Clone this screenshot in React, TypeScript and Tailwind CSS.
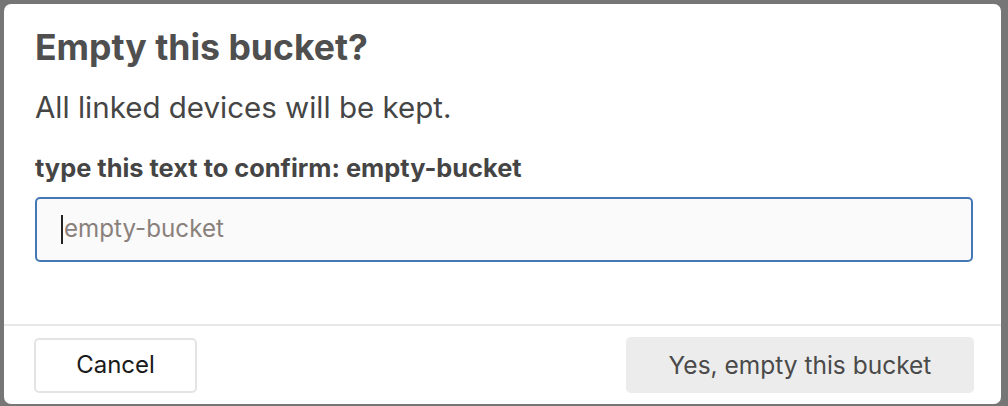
export default function App() {
    return (
        <div
            className="h-[406px] w-[1008px] bg-[#767676] pl-1 pr-[7px] pt-1 pb-[2px]"
            style={{ fontFamily: 'Inter, "Noto Sans", sans-serif' }}
        >
            <div className="flex h-full flex-col rounded-[7px] bg-white">
                <div className="flex flex-1 flex-col px-[31px] pt-[24px]">
                    <h1 className="text-[35.6px] leading-[40px] font-bold text-[#4f4f4f]">
                        Empty this bucket?
                    </h1>
                    <p className="mt-[21px] text-[29.5px] leading-[36px] text-[#454545]">
                        All linked devices will be kept.
                    </p>
                    <label className="mt-[27px] text-[25.4px] leading-[32px] font-bold text-[#454545]">
                        type this text to confirm: empty-bucket
                    </label>
                    <div className="mt-[13px] flex h-[65px] w-[938px] items-center rounded-[5px] border-2 border-[#4577b5] bg-[#fafafa] pl-[24px]">
                        <span className="mr-[1px] h-[29px] w-[2px] bg-[#222]" />
                        <span className="text-[24.2px] text-[#8a807c]">
                            empty-bucket
                        </span>
                    </div>
                </div>
                <div className="flex h-[80px] items-center justify-between border-t-2 border-[#e8e8e8] pr-[27px] pl-[30px]">
                    <button className="h-[55px] w-[163px] rounded-[5px] border-2 border-[#e4e4e4] bg-white text-[24px] text-[#1a1a1a]">
                        Cancel
                    </button>
                    <button className="h-[56px] w-[348px] rounded-[5px] bg-[#ececec] text-[24.5px] text-[#4a4a4a]">
                        Yes, empty this bucket
                    </button>
                </div>
            </div>
        </div>
    );
}
